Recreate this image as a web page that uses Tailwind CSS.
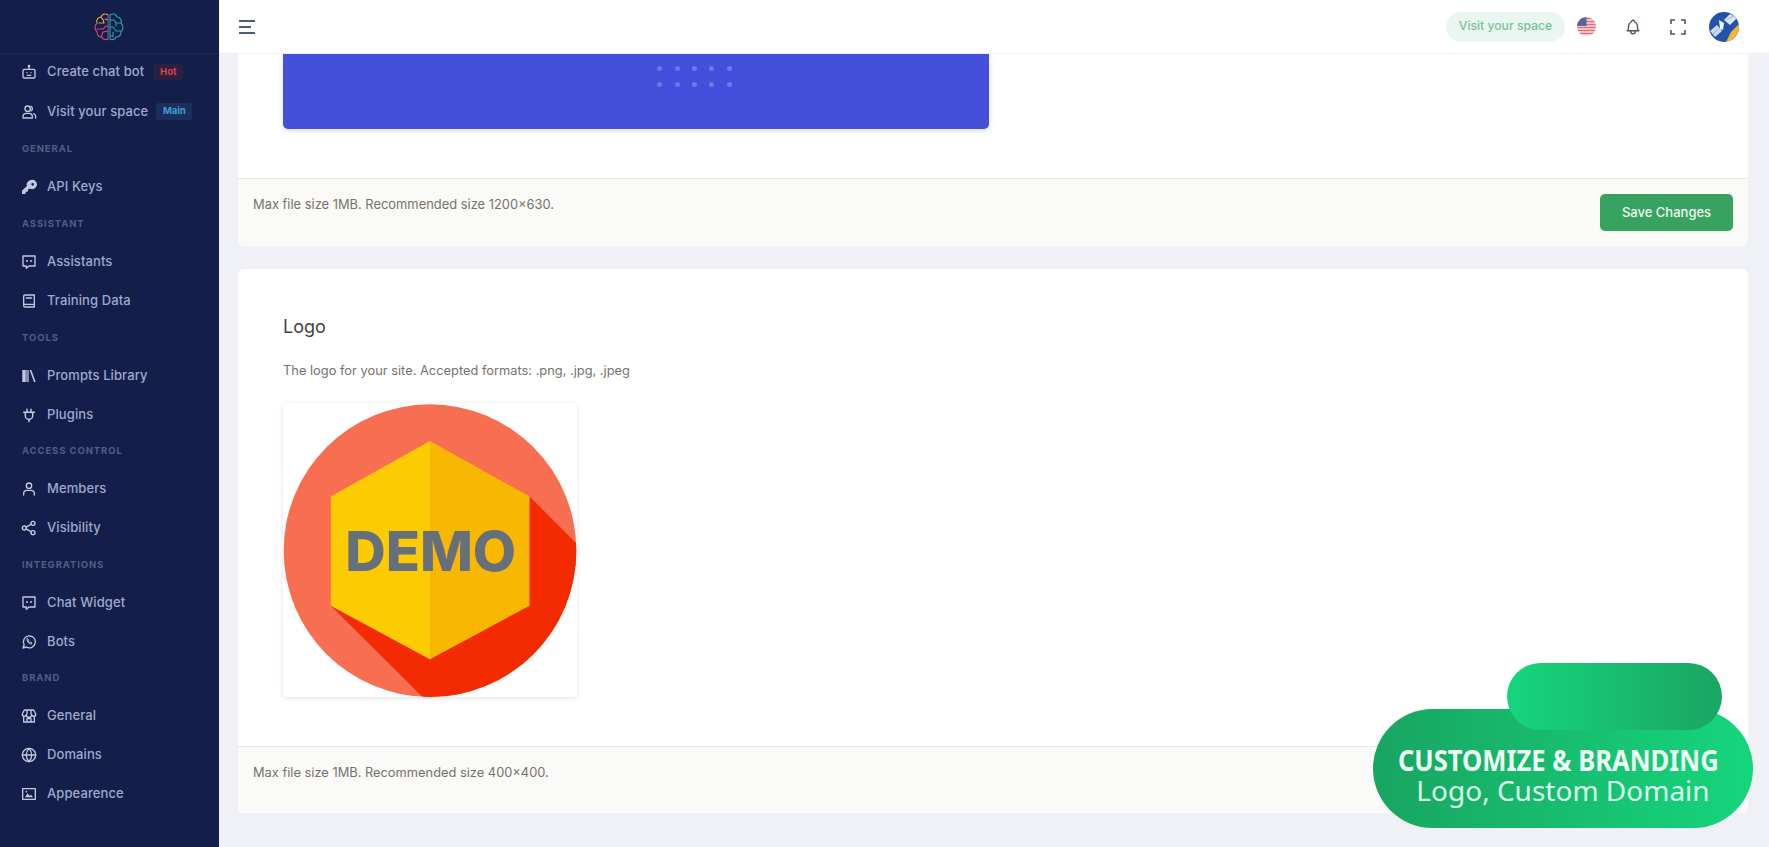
<!DOCTYPE html>
<html lang="en">
  <head>
    <meta charset="UTF-8" />
    <meta name="viewport" content="width=device-width, initial-scale=1.0" />
    <title>Branding</title>
    <script src="https://cdn.jsdelivr.net/npm/@tailwindcss/browser@4"></script>
  </head>
  <body class="bg-[#eff1f6] font-['Inter',sans-serif]">
    <div class="relative flex h-[847px] w-[1769px] overflow-hidden">
      <!-- sidebar -->
      <aside class="flex h-full w-[219px] shrink-0 flex-col bg-[#131f4a] font-['Inter',sans-serif] text-[#a0a8cd]">
        <div class="z-10 flex h-[54px] shrink-0 items-center justify-center border-b border-[#1c2954] bg-[#131f4a] pr-[2px]">
          <svg width="32" height="30" viewBox="0 0 32 30" fill="none" stroke-width="1.1" stroke-linecap="round">
            <g stroke="#e2a23c">
              <path d="M15 3C12 1 9 2 8 5 5 5 3 8 4 11" />
              <path d="M8 5c2 2 3 3 3 6M12 7l3 1M6 11h5" />
            </g>
            <g stroke="#d9486f">
              <path d="M4 11c-3 3-2 7 0 9 0 4 3 5 5 5 1 3 4 3 6 2" />
              <path d="M4 17h6l3-3M8 25l2-5 5-1M15 14h-2" />
            </g>
            <path d="M15 3v24" stroke="#7b5aa6" />
            <g stroke="#23a8a0">
              <path d="M17 3c3-2 6-1 7 2 3 0 5 3 4 6 3 3 2 7 0 9 0 4-3 5-5 5-1 3-4 3-6 2z" />
              <path d="M17 8h4l2 3v3M28 11h-5M17 15h3l3 4h5M20 20v5M17 24h3" />
            </g>
          </svg>
        </div>
        <nav class="-mt-[2px] text-[13px] font-medium tracking-[0.1px]">
          <a class="flex h-[40px] items-center pl-[21px]">
            <svg class="mr-[10px] h-[16px] w-[16px] shrink-0 text-[#c3c9e3]" viewBox="0 0 24 24" fill="none" stroke="currentColor" stroke-width="2" stroke-linecap="round" stroke-linejoin="round"><rect x="3" y="8" width="18" height="13" rx="2" /><path d="M12 8V4M9 13v.01M15 13v.01M9.5 17h5" /><circle cx="12" cy="3" r="1" /></svg>
            <span>Create chat bot</span>
            <span class="ml-[9px] flex h-[16px] w-[30px] items-center justify-center rounded-[3px] bg-[#2c1f40] text-[9.5px] font-bold tracking-normal text-[#d9434d]">Hot</span>
          </a>
          <a class="flex h-[39px] items-center pl-[21px]">
            <svg class="mr-[10px] h-[16px] w-[16px] shrink-0 text-[#c3c9e3]" viewBox="0 0 24 24" fill="none" stroke="currentColor" stroke-width="2" stroke-linecap="round" stroke-linejoin="round"><circle cx="10" cy="7" r="4" /><path d="M3 21v-2a5 5 0 0 1 5-5h4a5 5 0 0 1 5 5v2zM15 3.5a4 4 0 0 1 0 7M19 14.5a5 5 0 0 1 3 4.5v2" /></svg>
            <span>Visit your space</span>
            <span class="ml-[8px] flex h-[17px] w-[36px] items-center justify-center rounded-[3px] bg-[#1a2f5c] text-[9.5px] font-bold tracking-normal text-[#3f9ddd]">Main</span>
          </a>
          <div class="flex h-[36px] items-center pl-[22px] text-[9.5px] font-bold tracking-[0.9px] text-[#525d84]">GENERAL</div>
          <a class="flex h-[39px] items-center pl-[21px]">
            <svg class="mr-[10px] h-[16px] w-[16px] shrink-0 text-[#c3c9e3]" viewBox="0 0 24 24" fill="currentColor"><path d="M15.5 1.5a7 7 0 0 0-6.7 9L1.5 17.8V22.500h4.500l1-1v-2.500h2.500l1-1v-2.500h1.700l1.200-1.200a7 7 0 1 0 2.500-13zm2 4.500a2 2 0 1 1 0 4 2 2 0 0 1 0-4z" /></svg>
            <span>API Keys</span>
          </a>
          <div class="flex h-[36px] items-center pl-[22px] text-[9.5px] font-bold tracking-[0.9px] text-[#525d84]">ASSISTANT</div>
          <a class="flex h-[39px] items-center pl-[21px]">
            <svg class="mr-[10px] h-[16px] w-[16px] shrink-0 text-[#c3c9e3]" viewBox="0 0 24 24" fill="none" stroke="currentColor" stroke-width="2" stroke-linecap="round" stroke-linejoin="round"><path d="M3 3h18v15h-9l-4 3.500V18H3z" /><path d="M9 10.500v.01M15 10.500v.01" stroke-width="3" /></svg>
            <span>Assistants</span>
          </a>
          <a class="flex h-[39px] items-center pl-[21px]">
            <svg class="mr-[10px] h-[16px] w-[16px] shrink-0 text-[#c3c9e3]" viewBox="0 0 24 24" fill="none" stroke="currentColor" stroke-width="2" stroke-linecap="round" stroke-linejoin="round"><path d="M4 5a2 2 0 0 1 2-2h14v18H6a2 2 0 0 1-2-2z" /><path d="M4 17h16M8 7.500h8" /></svg>
            <span>Training Data</span>
          </a>
          <div class="flex h-[36px] items-center pl-[22px] text-[9.5px] font-bold tracking-[0.9px] text-[#525d84]">TOOLS</div>
          <a class="flex h-[39px] items-center pl-[21px]">
            <svg class="mr-[10px] h-[16px] w-[16px] shrink-0 text-[#c3c9e3]" viewBox="0 0 24 24" fill="currentColor"><rect x="2" y="3" width="5" height="18" /><rect x="7" y="3" width="5" height="18" opacity="0.65" /><path d="M13 3h2.500L22 21h-2.500z" /></svg>
            <span>Prompts Library</span>
          </a>
          <a class="flex h-[39px] items-center pl-[21px]">
            <svg class="mr-[10px] h-[16px] w-[16px] shrink-0 text-[#c3c9e3]" viewBox="0 0 24 24" fill="none" stroke="currentColor" stroke-width="2.200" stroke-linecap="round" stroke-linejoin="round"><path d="M4 8h16M6.500 8v5a5.500 5.500 0 0 0 11 0V8M9 3.500V8M15 3.500V8M12 18.500V22" /></svg>
            <span>Plugins</span>
          </a>
          <div class="flex h-[35px] items-center pl-[22px] text-[9.5px] font-bold tracking-[0.9px] text-[#525d84]">ACCESS CONTROL</div>
          <a class="flex h-[39px] items-center pl-[21px]">
            <svg class="mr-[10px] h-[16px] w-[16px] shrink-0 text-[#c3c9e3]" viewBox="0 0 24 24" fill="none" stroke="currentColor" stroke-width="2" stroke-linecap="round" stroke-linejoin="round"><circle cx="12" cy="7" r="4" /><path d="M4 21v-2a5 5 0 0 1 5-5h6a5 5 0 0 1 5 5v2" /></svg>
            <span>Members</span>
          </a>
          <a class="flex h-[39px] items-center pl-[21px]">
            <svg class="mr-[10px] h-[16px] w-[16px] shrink-0 text-[#c3c9e3]" viewBox="0 0 24 24" fill="none" stroke="currentColor" stroke-width="2" stroke-linecap="round" stroke-linejoin="round"><circle cx="5" cy="12" r="3" /><circle cx="18" cy="5" r="3" /><circle cx="18" cy="19" r="3" /><path d="M7.700 10.700l7.600-4.400M7.700 13.300l7.600 4.400" /></svg>
            <span>Visibility</span>
          </a>
          <div class="flex h-[36px] items-center pl-[22px] text-[9.5px] font-bold tracking-[0.9px] text-[#525d84]">INTEGRATIONS</div>
          <a class="flex h-[39px] items-center pl-[21px]">
            <svg class="mr-[10px] h-[16px] w-[16px] shrink-0 text-[#c3c9e3]" viewBox="0 0 24 24" fill="none" stroke="currentColor" stroke-width="2" stroke-linecap="round" stroke-linejoin="round"><path d="M3 3h18v15h-9l-4 3.500V18H3z" /><path d="M9 10.500v.01M15 10.500v.01" stroke-width="3" /></svg>
            <span>Chat Widget</span>
          </a>
          <a class="flex h-[39px] items-center pl-[21px]">
            <svg class="mr-[10px] h-[16px] w-[16px] shrink-0 text-[#c3c9e3]" viewBox="0 0 24 24" fill="none" stroke="currentColor" stroke-width="2" stroke-linecap="round" stroke-linejoin="round"><path d="M3 21l1.700-4.900A9 9 0 1 1 8 19.500z" /><path d="M9 8.500c-.5 3 3.500 7 6.500 6.500l1-1.500-2.500-1.500-1 .8c-1-.4-1.800-1.200-2.300-2.300l.8-1-1.500-2.500z" stroke-width="1.500" /></svg>
            <span>Bots</span>
          </a>
          <div class="flex h-[35px] items-center pl-[22px] text-[9.5px] font-bold tracking-[0.9px] text-[#525d84]">BRAND</div>
          <a class="flex h-[39px] items-center pl-[21px]">
            <svg class="mr-[10px] h-[16px] w-[16px] shrink-0 text-[#c3c9e3]" viewBox="0 0 24 24" fill="none" stroke="currentColor" stroke-width="2" stroke-linecap="round" stroke-linejoin="round"><path d="M5 3h14l3 6a3 3 0 0 1-6 1 3.500 3.500 0 0 1-8 0 3 3 0 0 1-6-1zM4 12v9h16v-9M9 21v-5h6v5M9 3v6M15 3v6" /></svg>
            <span>General</span>
          </a>
          <a class="flex h-[39px] items-center pl-[21px]">
            <svg class="mr-[10px] h-[16px] w-[16px] shrink-0 text-[#c3c9e3]" viewBox="0 0 24 24" fill="none" stroke="currentColor" stroke-width="2" stroke-linecap="round" stroke-linejoin="round"><circle cx="12" cy="12" r="10" /><path d="M2 12h20M12 2c-5.500 6-5.500 14 0 20M12 2c5.500 6 5.500 14 0 20" /></svg>
            <span>Domains</span>
          </a>
          <a class="flex h-[39px] items-center pl-[21px]">
            <svg class="mr-[10px] h-[16px] w-[16px] shrink-0 text-[#c3c9e3]" viewBox="0 0 24 24" fill="none" stroke="currentColor" stroke-width="2" stroke-linejoin="round"><rect x="2.500" y="4" width="19" height="16" /><path d="M6 17l4-6 3 4 2-2 3 4z" fill="currentColor" stroke="none" /><circle cx="8" cy="8.500" r="1.200" fill="currentColor" stroke="none" /></svg>
            <span>Appearence</span>
          </a>
        </nav>
      </aside>

      <!-- main -->
      <main class="flex h-full min-w-0 flex-1 flex-col">
        <header class="z-10 flex h-[54px] shrink-0 items-center justify-between border-b border-[#eef0f4] bg-white pl-[20px] pr-[30px]">
          <button class="flex w-[16px] flex-col gap-[4px]">
            <span class="h-[2px] w-[16px] bg-[#4f5d73]"></span>
            <span class="h-[2px] w-[12px] bg-[#4f5d73]"></span>
            <span class="h-[2px] w-[16px] bg-[#4f5d73]"></span>
          </button>
          <div class="flex items-center">
            <a class="flex h-[30px] w-[119px] items-center justify-center rounded-full bg-[#e9f7f0] text-[12.2px] font-medium text-[#7cc09b]">Visit your space</a>
            <svg class="ml-[12px] h-[19px] w-[19px]" viewBox="0 0 19 19">
              <clipPath id="flag"><circle cx="9.500" cy="9.500" r="9.500" /></clipPath>
              <g clip-path="url(#flag)">
                <rect width="19" height="19" fill="#f6dfe0" />
                <path d="M0 1.500h19M0 4.500h19M0 7.500h19M0 10.500h19M0 13.500h19M0 16.500h19" stroke="#e36b75" stroke-width="1.500" />
                <rect width="9.500" height="9" fill="#56659f" />
              </g>
            </svg>
            <svg class="ml-[28px] h-[18px] w-[18px] text-[#4b5563]" viewBox="0 0 24 24" fill="none" stroke="currentColor" stroke-width="1.800" stroke-linecap="round" stroke-linejoin="round"><path d="M10 5a2 2 0 1 1 4 0 7 7 0 0 1 4 6v3a4 4 0 0 0 2 3H4a4 4 0 0 0 2-3v-3a7 7 0 0 1 4-6M9 17v1a3 3 0 0 0 6 0v-1" /></svg>
            <svg class="ml-[28px] h-[16px] w-[16px] text-[#4b5563]" viewBox="0 0 16 16" fill="none" stroke="currentColor" stroke-width="1.600"><path d="M1 5V1h4M11 1h4v4M15 11v4h-4M5 15H1v-4" /></svg>
            <svg class="ml-[23px] h-[30px] w-[30px]" viewBox="0 0 30 30">
              <clipPath id="avatar"><circle cx="15" cy="15" r="15" /></clipPath>
              <g clip-path="url(#avatar)">
                <rect width="30" height="30" fill="#2451ac" />
                <path d="M30 12l-8 8-5 10h13z" fill="#f2b632" />
                <path d="M1 19l7-6 5 6-7 6z" fill="#c9d8f5" />
                <path d="M15 8l6-6 7 4-7 7z" fill="#dbe5f7" />
                <path d="M10 8l5 3-1 7-3-1z" fill="#f1f5fc" />
                <path d="M4 22l5-5M18 8l6-4" stroke="#7f9bd6" stroke-width="0.800" />
              </g>
            </svg>
          </div>
        </header>

        <div class="min-h-0 flex-1 overflow-hidden pl-[19px] pr-[21px]">
          <!-- share image card, scrolled so only the bottom shows -->
          <section class="overflow-hidden rounded-b-[6px] bg-white">
            <div class="h-[124px] px-[45px]">
              <div class="flex h-[75px] w-[706px] flex-col items-center gap-[11px] rounded-b-[5px] bg-[#444fdb] pl-[117px] pt-[12px] shadow-[0_2px_5px_rgba(68,79,219,0.2)]">
                <div class="flex gap-[12.300px]"><i class="h-[5px] w-[5px] rounded-full bg-[#6f78e6]"></i><i class="h-[5px] w-[5px] rounded-full bg-[#6f78e6]"></i><i class="h-[5px] w-[5px] rounded-full bg-[#6f78e6]"></i><i class="h-[5px] w-[5px] rounded-full bg-[#6f78e6]"></i><i class="h-[5px] w-[5px] rounded-full bg-[#6f78e6]"></i></div>
                <div class="flex gap-[12.300px]"><i class="h-[5px] w-[5px] rounded-full bg-[#6f78e6]"></i><i class="h-[5px] w-[5px] rounded-full bg-[#6f78e6]"></i><i class="h-[5px] w-[5px] rounded-full bg-[#6f78e6]"></i><i class="h-[5px] w-[5px] rounded-full bg-[#6f78e6]"></i><i class="h-[5px] w-[5px] rounded-full bg-[#6f78e6]"></i></div>
              </div>
            </div>
            <div class="flex items-start justify-between border-t border-[#e8e7e3] bg-[#fafaf8] px-[15px] py-[15px]">
              <p class="pt-[1px] text-[12.9px] leading-[20px] text-[#78716c]">Max file size 1MB. Recommended size 1200×630.</p>
              <button class="h-[37px] w-[133px] rounded-[5px] bg-[#38a360] text-[13px] font-medium text-[#eef9f2]">Save Changes</button>
            </div>
          </section>

          <!-- logo card -->
          <section class="mt-[23px] overflow-hidden rounded-[6px] bg-white">
            <div class="h-[477px] px-[45px] pt-[45px]">
              <h2 class="text-[18px] font-normal leading-[26px] text-[#3f3f46]">Logo</h2>
              <p class="mt-[21px] text-[12.85px] leading-[20px] text-[#78716c]">The logo for your site. Accepted formats: .png, .jpg, .jpeg</p>
              <div class="mt-[22px] h-[294px] w-[294px] rounded-[4px] bg-white shadow-[0_1px_5px_rgba(0,0,0,0.12)]">
                <svg class="h-[294px] w-[294px]" viewBox="40 38 880 880">
                  <clipPath id="logo-circle"><circle cx="480" cy="480" r="438" /></clipPath>
                  <circle cx="480" cy="480" r="438" fill="#f76e50" />
                  <polygon clip-path="url(#logo-circle)" points="778,318 940,480 940,960 500,960 183,645 480,805" fill="#f42a00" />
                  <polygon points="480,152 183,318 183,645 480,805" fill="#fdcb02" />
                  <polygon points="480,152 778,318 778,645 480,805" fill="#f8b700" />
                  <text x="226" y="540" textLength="512" lengthAdjust="spacingAndGlyphs" font-family="Inter, sans-serif" font-weight="800" font-size="165" fill="#666f7c">DEMO</text>
                </svg>
              </div>
            </div>
            <div class="flex items-start border-t border-[#e8e7e3] bg-[#fafaf8] px-[15px] pb-[15px] pt-[15px]">
              <p class="h-[36px] pt-[1px] text-[12.85px] leading-[20px] text-[#78716c]">Max file size 1MB. Recommended size 400×400.</p>
            </div>
          </section>
        </div>
      </main>

      <!-- promo banner over the page -->
      <div class="absolute left-[1373px] top-[663px] h-[165px] w-[380px]">
        <div class="absolute left-0 top-[46px] flex h-[119px] w-[380px] flex-col items-center rounded-full bg-gradient-to-r from-[#18a561] to-[#15d67c] pt-[36px]">
          <p class="-translate-x-[5px] scale-x-[0.915] font-['Noto_Sans',sans-serif] text-[28px] font-bold leading-[30px] text-[#eefff6]">CUSTOMIZE &amp; BRANDING</p>
          <p class="font-['Noto_Sans',sans-serif] text-[28px] leading-[30px] text-[#dcfff0]">Logo, Custom Domain</p>
        </div>
        <div class="absolute left-[134px] top-0 h-[67px] w-[215px] rounded-full bg-gradient-to-r from-[#15d67c] to-[#1aa562]"></div>
      </div>
    </div>
  </body>
</html>
